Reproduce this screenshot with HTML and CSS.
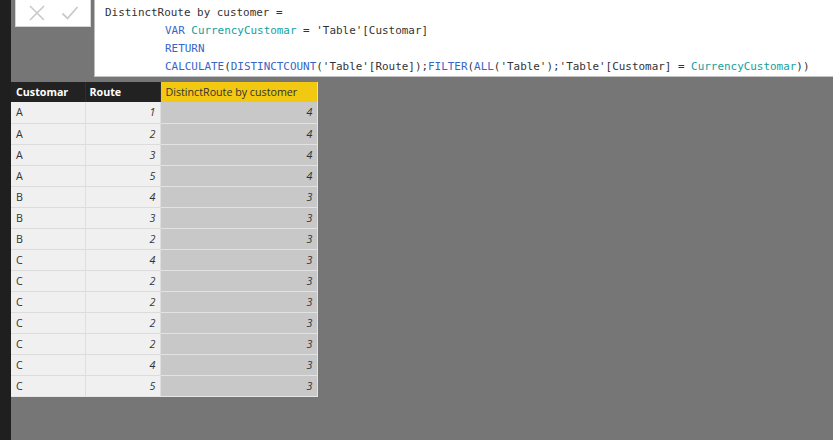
FILE: index.html
```html
<!DOCTYPE html>
<html>
<head>
<meta charset="utf-8">
<link rel="stylesheet" href="styles.css">
</head>
<body>
<div class="app">
  <div class="strip"></div>
  <div class="main">
    <div class="formula-bar">
      <div class="buttons">
        <svg class="btn-icon" width="18" height="18" viewBox="0 0 18 18"><path d="M2 2 L16 16 M16 2 L2 16" stroke="#c9c9c9" stroke-width="1.6" fill="none"/></svg>
        <svg class="btn-icon" width="18" height="18" viewBox="0 0 18 18"><path d="M1.5 9.5 L6.5 14.5 L16.5 3" stroke="#c9c9c9" stroke-width="1.8" fill="none"/></svg>
      </div>
      <div class="formula">
        <div class="line">DistinctRoute by customer =</div>
        <div class="line ind"><span class="kw">VAR</span> <span class="var">CurrencyCustomar</span> = 'Table'[Customar]</div>
        <div class="line ind"><span class="kw">RETURN</span></div>
        <div class="line ind"><span class="kw">CALCULATE</span>(<span class="kw">DISTINCTCOUNT</span>('Table'[Route]);<span class="kw">FILTER</span>(<span class="kw">ALL</span>('Table');'Table'[Customar] = <span class="var">CurrencyCustomar</span>))</div>
      </div>
    </div>
    <table class="grid">
      <thead>
        <tr><th class="c1">Customar</th><th class="c2">Route</th><th class="c3">DistinctRoute by customer</th></tr>
      </thead>
      <tbody>
        <tr><td class="c1">A</td><td class="c2">1</td><td class="c3">4</td></tr>
        <tr><td class="c1">A</td><td class="c2">2</td><td class="c3">4</td></tr>
        <tr><td class="c1">A</td><td class="c2">3</td><td class="c3">4</td></tr>
        <tr><td class="c1">A</td><td class="c2">5</td><td class="c3">4</td></tr>
        <tr><td class="c1">B</td><td class="c2">4</td><td class="c3">3</td></tr>
        <tr><td class="c1">B</td><td class="c2">3</td><td class="c3">3</td></tr>
        <tr><td class="c1">B</td><td class="c2">2</td><td class="c3">3</td></tr>
        <tr><td class="c1">C</td><td class="c2">4</td><td class="c3">3</td></tr>
        <tr><td class="c1">C</td><td class="c2">2</td><td class="c3">3</td></tr>
        <tr><td class="c1">C</td><td class="c2">2</td><td class="c3">3</td></tr>
        <tr><td class="c1">C</td><td class="c2">2</td><td class="c3">3</td></tr>
        <tr><td class="c1">C</td><td class="c2">2</td><td class="c3">3</td></tr>
        <tr><td class="c1">C</td><td class="c2">4</td><td class="c3">3</td></tr>
        <tr><td class="c1">C</td><td class="c2">5</td><td class="c3">3</td></tr>
      </tbody>
    </table>
  </div>
</div>
</body>
</html>
```

FILE: styles.css
```css
html, body {
  margin: 0;
  padding: 0;
  height: 100%;
  background: #767676;
  overflow: hidden;
}
.app {
  display: flex;
  height: 440px;
}
.strip {
  width: 11px;
  flex: none;
  background: #1f1f1f;
}
.main {
  flex: 1;
  display: flex;
  flex-direction: column;
}
.formula-bar {
  display: flex;
  height: 77px;
}
.buttons {
  margin-left: 4px;
  background: #fff;
  border: 1px solid #d4d4d4;
  border-top: none;
  display: flex;
  align-items: center;
  justify-content: space-around;
  padding: 0 4px;
  box-sizing: border-box;
  width: 76px;
  height: 27px;
}
.btn-icon { display: block; }
.formula {
  margin-left: 3px;
  flex: 1;
  background: #fff;
  border-left: 1px solid #bdbdbd;
  border-bottom: 1px solid #c4c4c4;
  box-sizing: border-box;
  padding: 4px 0 0 10px;
  font-family: "DejaVu Sans Mono", "Liberation Mono", monospace;
  font-size: 10.93px;
  line-height: 18px;
  color: #333;
}
.line { white-space: pre; }
.line.ind { padding-left: 60px; }
.kw { color: #3766c6; }
.var { color: #14a0a0; }

.grid {
  margin-top: 5px;
  border-collapse: collapse;
  font-family: "Open Sans", "Noto Sans", sans-serif;
  font-size: 10.7px;
  table-layout: fixed;
  width: 306px;
}
.grid th, .grid td {
  box-sizing: border-box;
  padding: 0 5px;
  white-space: nowrap;
  overflow: hidden;
}
.grid th {
  background: #222;
  color: #fff;
  font-weight: bold;
  text-align: left;
  height: 20px;
  border-right: 1px solid #2e2e2e;
}
.grid th.c2 { padding-left: 4px; }
.grid th.c3 {
  background: #f2c811;
  color: #333;
  font-weight: normal;
  border-right: 1px solid #e0e0e0;
}
.grid th.c1, .grid td.c1 { width: 74px; }
.grid th.c2, .grid td.c2 { width: 75px; }
.grid th.c3, .grid td.c3 { width: 157px; }
.grid td {
  height: 21px;
  background: #f0f0f0;
  color: #333;
  border-right: 1px solid #dedede;
  border-bottom: 1px solid #dcdcdc;
}
.grid td.c2, .grid td.c3 {
  text-align: right;
  font-style: italic;
  padding-right: 4px;
}
.grid td.c3 {
  background: #c8c8c8;
  border-bottom: 1px solid #e2e2e2;
  border-right: 1px solid #e2e2e2;
}
.grid tbody tr:last-child td { border-bottom: 1px solid #e6e6e6; }
```
